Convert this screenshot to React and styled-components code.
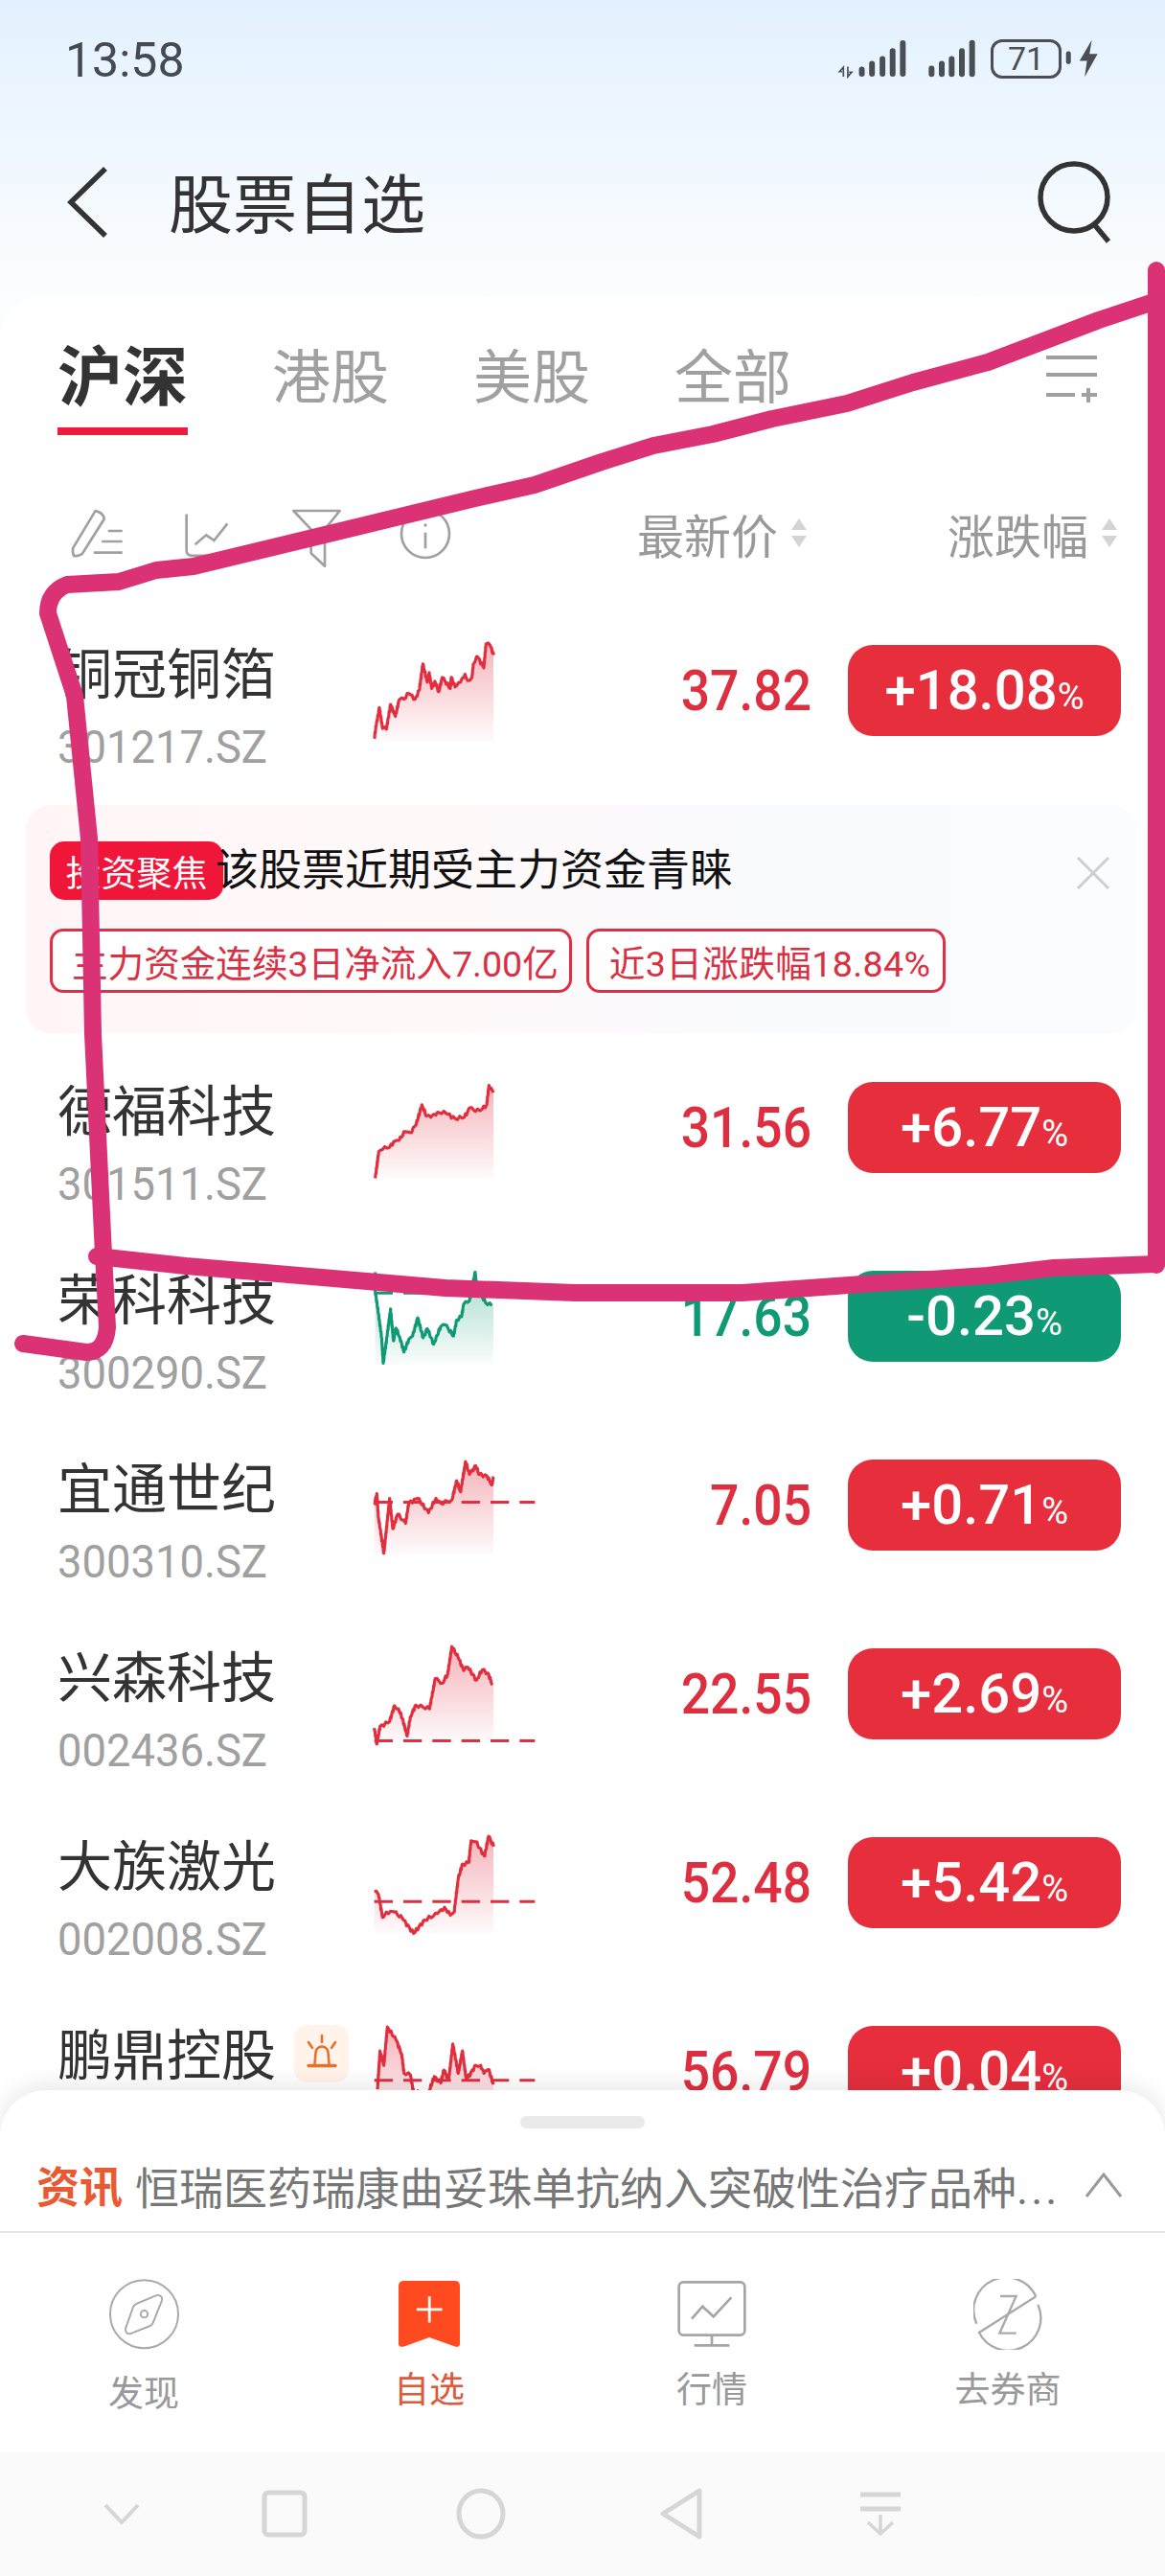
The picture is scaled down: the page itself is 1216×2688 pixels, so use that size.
import React from "react";
import styled, { createGlobalStyle } from "styled-components";

const UP = "#dd2f40";
const DOWN = "#0f9a75";
const FONT = `Roboto, "Noto Sans CJK SC", sans-serif`;

const GlobalStyle = createGlobalStyle`
  html, body {
    margin: 0;
    padding: 0;
    background: #fff;
  }
  * {
    box-sizing: border-box;
  }
`;

// points are plotted in a 3x grid, `cy` is the row's centre on that grid
const stocks = [
  {
    name: "铜冠铜箔", code: "301217.SZ", price: "37.82", pct: "+18.08", cy: 241, floor: 400,
    line: [[92,392],[98,350],[108,295],[118,360],[130,362],[143,285],[158,322],[170,270],[185,268],[200,250],[220,268],[233,240],[244,158],[258,215],[264,185],[272,235],[282,212],[294,245],[305,200],[330,235],[333,200],[345,230],[362,215],[376,190],[385,210],[398,200],[402,158],[415,135],[435,170],[442,95],[455,100],[466,130]],
  },
  {
    name: "德福科技", code: "301511.SZ", price: "31.56", pct: "+6.77", cy: 0, floor: 159,
    line: [[95,159],[106,75],[125,60],[140,62],[153,44],[170,40],[188,13],[205,16],[223,-9],[241,-71],[255,-36],[269,-32],[290,-48],[316,-45],[345,-28],[374,-32],[392,-62],[409,-50],[430,-58],[444,-71],[451,-132],[465,-109]],
  },
  {
    name: "荣科科技", code: "300290.SZ", price: "17.63", pct: "-0.23", cy: 223, floor: 375, down: true, dash: 150,
    line: [[95,85],[95,145],[105,215],[115,290],[120,370],[128,315],[143,200],[152,300],[160,260],[172,290],[185,335],[200,295],[212,285],[228,228],[245,290],[258,262],[278,310],[300,255],[315,250],[340,285],[350,235],[365,225],[372,185],[390,175],[408,85],[415,160],[430,160],[440,180],[460,190]],
  },
  {
    name: "宜通世纪", code: "300310.SZ", price: "7.05", pct: "+0.71", cy: 211, floor: 365, dash: 202,
    line: [[92,210],[100,175],[105,250],[122,362],[140,190],[150,285],[165,240],[190,268],[200,205],[228,190],[262,235],[285,190],[300,205],[335,195],[350,135],[362,170],[378,75],[390,115],[410,88],[420,115],[445,120],[460,148],[466,122]],
  },
  {
    name: "兴森科技", code: "002436.SZ", price: "22.55", pct: "+2.69", cy: 803, floor: 950, dash: 950,
    line: [[92,910],[100,960],[110,905],[140,890],[155,840],[168,850],[180,880],[195,935],[205,875],[222,838],[245,845],[265,850],[283,755],[305,770],[322,740],[335,655],[355,690],[372,730],[385,720],[412,760],[430,728],[448,738],[462,775]],
  },
  {
    name: "大族激光", code: "002008.SZ", price: "52.48", pct: "+5.42", cy: 253, floor: 412, dash: 312,
    line: [[92,280],[105,290],[118,362],[130,345],[155,345],[180,365],[215,412],[250,370],[290,350],[312,330],[330,355],[342,345],[355,240],[368,195],[388,190],[395,122],[410,125],[437,170],[450,108],[466,140]],
  },
  {
    name: "鹏鼎控股", code: "002938.SZ", price: "56.79", pct: "+0.04", cy: 844, floor: 1000, dash: 872, alert: true,
    line: [[102,900],[110,780],[122,825],[133,705],[160,745],[178,790],[185,850],[205,855],[215,910],[262,910],[280,860],[300,880],[310,840],[325,870],[338,758],[355,850],[368,780],[380,870],[410,825],[425,825],[435,850],[450,838],[465,885]],
  },
];

// adds the small tick-by-tick wobble between the plotted points
const roughen = (line, seed) => {
  const out = [];
  let n = 0;
  line.forEach(([x, y], i) => {
    if (i === 0) {
      out.push([x, y]);
      return;
    }
    const [px, py] = line[i - 1];
    const steps = Math.max(1, Math.round(Math.hypot(x - px, y - py) / 7));
    for (let s = 1; s <= steps; s++) {
      n += 1;
      const t = s / steps;
      const wob = s === steps ? 0 : Math.sin(n * 2.3 + seed) * 5.5;
      out.push([px + (x - px) * t, py + (y - py) * t + wob]);
    }
  });
  return out;
};

const Sparkline = ({ id, stock }) => {
  const color = stock.down ? DOWN : "#e12f3f";
  const pts = roughen(stock.line, id * 1.7).map(([x, y]) => [x, y - stock.cy]);
  const d = pts.map(([x, y]) => `${x.toFixed(1)},${y.toFixed(1)}`).join(" ");
  const floor = stock.floor - stock.cy;
  const area = `${pts[0][0]},${floor} ${d} 465,${pts[pts.length - 1][1].toFixed(1)} 465,${floor}`;
  return (
    <ChartSvg viewBox="90 -295.5 510 591">
      <defs>
        <linearGradient id={`fade${id}`} x1="0" y1="0" x2="0" y2="1">
          <stop offset="0" stopColor={color} stopOpacity="0.36" />
          <stop offset="1" stopColor={color} stopOpacity="0.02" />
        </linearGradient>
      </defs>
      <polygon points={area} fill={`url(#fade${id})`} />
      <polyline points={d} fill="none" stroke={color} strokeWidth="9.5" strokeLinejoin="round" />
      {stock.dash !== undefined && (
        <line
          x1="92"
          x2="595"
          y1={stock.dash - stock.cy}
          y2={stock.dash - stock.cy}
          stroke={color}
          strokeWidth="9"
          strokeDasharray="58 33"
        />
      )}
    </ChartSvg>
  );
};

const StockRow = ({ id, stock }) => (
  <Row>
    <NameCell>
      <NameLine>
        <Name>{stock.name}</Name>
        {stock.alert && (
          <AlertBadge>
            <svg width="40" height="44" viewBox="0 0 40 44" fill="none" stroke="#e8702a" strokeWidth="2.6" strokeLinecap="round">
              <path d="M12.5 33l1-12a6.5 6.5 0 0 1 13 0l1 12" />
              <path d="M6 34.5h28" strokeWidth="3.4" />
              <path d="M20 3v7M6 10l4 6M34 10l-4 6" />
            </svg>
          </AlertBadge>
        )}
      </NameLine>
      <Code>{stock.code}</Code>
    </NameCell>
    <Sparkline id={id} stock={stock} />
    <Price $down={stock.down}>{stock.price}</Price>
    <Change $down={stock.down}>
      <ChangeNum>{stock.pct}</ChangeNum>
      <ChangeUnit>%</ChangeUnit>
    </Change>
  </Row>
);

const SortArrows = () => (
  <svg width="20" height="30" viewBox="0 0 20 30" fill="#d4d4d4">
    <path d="M10 0l8 12H2z" />
    <path d="M10 30L2 18h16z" />
  </svg>
);

const navItems = [
  {
    label: "发现",
    drop: true,
    icon: (
      <svg width="75" height="78" viewBox="150 78 226 232" fill="none" stroke="#aaa" strokeWidth="6">
        <circle cx="263" cy="193" r="107" />
        <path d="M312 135q10 5 6 17l-28 70q-3 6-10 9l-58 23q-18 4-18-14l24-68q3-9 12-12l60-25q7-3 12 0z" />
        <circle cx="263" cy="193" r="11" />
      </svg>
    ),
  },
  {
    label: "自选",
    active: true,
    icon: (
      <svg width="66" height="72" viewBox="1030 85 193 210">
        <path d="M1050 88h155q15 0 15 15v177q0 12-15 8l-78-28-77 28q-17 4-17-8V103q0-15 17-15z" fill="#ff4a1f" />
        <path d="M1127 135v80M1088 175h78" stroke="#fff" strokeWidth="8" />
      </svg>
    ),
  },
  {
    label: "行情",
    icon: (
      <svg width="72" height="72" viewBox="133 85 216 216" fill="none" stroke="#a5a5a5" strokeWidth="8">
        <rect x="138" y="92" width="206" height="166" rx="14" />
        <path d="M241 258v32M186 290h110" />
        <path d="M178 207l34-39 34 32 56-60" />
      </svg>
    ),
  },
  {
    label: "去券商",
    icon: (
      <svg width="72" height="74" viewBox="1032 80 216 222" fill="none" stroke="#aaa" strokeWidth="7">
        <path d="M1228 135A102 102 0 0 0 1042 220" />
        <path d="M1228 135L1050 248A102 102 0 0 0 1234 160" />
        <path d="M1116 134h50l-52 116h52" />
      </svg>
    ),
  },
];

const App = () => (
  <Screen>
    <GlobalStyle />
    <StatusBar>
      <Clock>13:58</Clock>
      <StatusIcons>
        <svg width="73" height="42" viewBox="100 60 220 125" fill="#4a4f54">
          <path d="M122 180v-30l-12 14h8M136 148v32l12-14h-8" stroke="#4a4f54" strokeWidth="5" fill="none" />
          <rect x="171" y="148" width="18" height="32" rx="9" />
          <rect x="203" y="130" width="18" height="50" rx="9" />
          <rect x="236" y="115" width="18" height="65" rx="9" />
          <rect x="268" y="90" width="18" height="90" rx="9" />
          <rect x="300" y="65" width="18" height="115" rx="9" />
        </svg>
        <SignalB width="50" height="42" viewBox="390 60 150 125" fill="#4a4f54">
          <rect x="391" y="145" width="18" height="35" rx="9" />
          <rect x="423" y="130" width="18" height="50" rx="9" />
          <rect x="454" y="115" width="18" height="65" rx="9" />
          <rect x="486" y="90" width="18" height="90" rx="9" />
          <rect x="518" y="65" width="18" height="115" rx="9" />
        </SignalB>
        <Battery>71</Battery>
        <Charging width="37" height="42" viewBox="815 60 110 125" fill="#4a4f54">
          <rect x="820" y="100" width="15" height="40" rx="7" />
          <path d="M900 65l-38 65h23l-7 50 40-72h-25z" />
        </Charging>
      </StatusIcons>
    </StatusBar>

    <Header>
      <svg width="44" height="74" viewBox="0 0 44 74" fill="none" stroke="#333" strokeWidth="5.5">
        <path d="M40 2L4 37l36 35" />
      </svg>
      <Title>股票自选</Title>
      <SearchIcon width="82" height="86" viewBox="0 0 82 86" fill="none" stroke="#333" strokeWidth="5.5">
        <ellipse cx="38" cy="38" rx="35" ry="35" />
        <path d="M59 66l15 18" />
      </SearchIcon>
    </Header>

    <ListCard>
      <TabBar>
        <Tab $active>沪深</Tab>
        <Tab>港股</Tab>
        <Tab>美股</Tab>
        <Tab>全部</Tab>
        <TabEdit width="56" height="50" viewBox="0 0 56 50" fill="none" stroke="#a0a0a0" strokeWidth="4">
          <path d="M1 3h53M1 21h53M1 42h30M45 35v15M38 42h16" />
        </TabEdit>
      </TabBar>

      <ColumnHead>
        <HeadTool>
          <svg width="58" height="55" viewBox="70 60 175 165" fill="none" stroke="#a0a0a0" strokeWidth="8" strokeLinejoin="round">
            <path d="M150 72q25 5 28 25L108 208q-12 8-26 5-5-10-2-25z" />
            <path d="M190 135h45M170 168h65M145 203h90" />
          </svg>
        </HeadTool>
        <HeadTool>
          <svg width="48" height="55" viewBox="425 60 145 165" fill="none" stroke="#a0a0a0" strokeWidth="8">
            <path d="M433 82v113q0 18 18 18h114" />
            <path d="M460 178l35-30 25 17 42-53" />
          </svg>
        </HeadTool>
        <HeadTool>
          <OverflowSvg width="55" height="55" viewBox="760 60 165 165" fill="none" stroke="#a0a0a0" strokeWidth="8" strokeLinejoin="round">
            <path d="M770 72h145l-47 58v115l-43-40v-75z" />
          </OverflowSvg>
        </HeadTool>
        <HeadTool>
          <svg width="54" height="55" viewBox="1105 60 160 165" fill="none" stroke="#a0a0a0" strokeWidth="8">
            <circle cx="1185" cy="144" r="75" />
            <path d="M1185 140v50" />
            <circle cx="1185" cy="117" r="5" fill="#a0a0a0" stroke="none" />
          </svg>
        </HeadTool>
        <SortGroup $first>
          <SortLabel>最新价</SortLabel>
          <SortArrows />
        </SortGroup>
        <SortGroup>
          <SortLabel>涨跌幅</SortLabel>
          <SortArrows />
        </SortGroup>
      </ColumnHead>

      <StockRow id={0} stock={stocks[0]} />

      <Insight>
        <InsightTop>
          <InsightBadge>投资聚焦</InsightBadge>
          <InsightTitle>该股票近期受主力资金青睐</InsightTitle>
          <InsightClose width="36" height="36" viewBox="0 0 36 36" stroke="#cfcfcf" strokeWidth="3">
            <path d="M2 2l32 32M34 2L2 34" />
          </InsightClose>
        </InsightTop>
        <InsightTags>
          <InsightTag>主力资金连续3日净流入7.00亿</InsightTag>
          <InsightTag $wide>近3日涨跌幅18.84%</InsightTag>
        </InsightTags>
      </Insight>

      {stocks.slice(1).map((stock, i) => (
        <StockRow key={stock.code} id={i + 1} stock={stock} />
      ))}
    </ListCard>

    <Sheet>
      <Handle />
      <NewsRow>
        <NewsTag>资讯</NewsTag>
        <NewsText>恒瑞医药瑞康曲妥珠单抗纳入突破性治疗品种<NewsDots>...</NewsDots></NewsText>
        <svg width="38" height="26" viewBox="0 0 38 26" fill="none" stroke="#999" strokeWidth="3">
          <path d="M1 25L19 2l18 23" />
        </svg>
      </NewsRow>
      <NavBar>
        {navItems.map((item) => (
          <NavItem key={item.label}>
            <NavIcon>{item.icon}</NavIcon>
            <NavLabel $active={item.active} $drop={item.drop}>{item.label}</NavLabel>
          </NavItem>
        ))}
      </NavBar>
      <SystemBar>
        <svg width="38" height="22" viewBox="0 0 38 22" fill="none" stroke="#d6d6d6" strokeWidth="4">
          <path d="M2 2l17 18L36 2" />
        </svg>
        <svg width="48" height="50" viewBox="0 0 48 50" fill="none" stroke="#d6d6d6" strokeWidth="5">
          <rect x="3" y="3" width="42" height="44" rx="4" />
        </svg>
        <svg width="52" height="54" viewBox="0 0 52 54" fill="none" stroke="#d6d6d6" strokeWidth="5">
          <ellipse cx="26" cy="27" rx="23" ry="24" />
        </svg>
        <svg width="46" height="54" viewBox="0 0 46 54" fill="none" stroke="#d6d6d6" strokeWidth="5" strokeLinejoin="round">
          <path d="M42 3L4 27l38 24z" />
        </svg>
        <svg width="44" height="46" viewBox="0 0 44 46" fill="none" stroke="#d6d6d6">
          <path d="M1 3h42M1 18h42" strokeWidth="5" />
          <path d="M22 24v20M9 32l13 12 13-12" strokeWidth="3.5" />
        </svg>
      </SystemBar>
    </Sheet>

    {/* marker strokes drawn over the list */}
    <MarkerLayer viewBox="0 0 1216 2688" fill="none" stroke="#db3275" strokeWidth="18" strokeLinecap="round" strokeLinejoin="round">
      <path d="M1207 282V1320" />
      <path d="M1207 314L1147 334L1031 378L953 399L884 421L806 437L744 453L682 465L628 482L558 506L496 520L310 565L202 591L163 595L124 607L70 610Q50 618 50 640L78 726L93 875L97 1079L108 1309L112 1385Q110 1411 90 1411L24 1402" />
      <path d="M1207 1319L1100 1323L1031 1331L900 1340L775 1349L600 1349L465 1344L194 1321L101 1311" />
    </MarkerLayer>
  </Screen>
);

const Screen = styled.div`
  position: relative;
  width: 1216px;
  height: 2688px;
  overflow: hidden;
  font-family: ${FONT};
  background: linear-gradient(180deg, #e3f1fe 0, #ecf6ff 120px, #f8fbff 250px, #fcfdff 310px);
`;

const StatusBar = styled.div`
  display: flex;
  align-items: center;
  justify-content: space-between;
  height: 122px;
  padding: 0 68px 0 68px;
`;

const Clock = styled.span`
  margin-top: 3px;
  font-size: 50px;
  color: #454a50;
`;

const StatusIcons = styled.div`
  display: flex;
  align-items: center;
`;

const SignalB = styled.svg`
  margin-left: 23px;
`;

const Battery = styled.span`
  display: flex;
  align-items: center;
  justify-content: center;
  width: 74px;
  height: 41px;
  margin-left: 15px;
  border: 3.5px solid #4a4f54;
  border-radius: 12px;
  font-size: 34px;
  color: #4a4f54;
`;

const Charging = styled.svg`
  margin-left: 3px;
`;

const Header = styled.div`
  display: flex;
  align-items: center;
  height: 178px;
  padding: 0 51px 0 70px;
`;

const Title = styled.h1`
  margin: -6px 0 0 62px;
  font-size: 67px;
  font-weight: 400;
  color: #333;
`;

const SearchIcon = styled.svg`
  margin-left: auto;
`;

const ListCard = styled.div`
  margin-top: 10px;
  height: 2400px;
  background: #fff;
  border-radius: 44px 44px 0 0;
`;

const TabBar = styled.div`
  display: flex;
  align-items: flex-start;
  gap: 88px;
  padding: 45px 69px 0 60px;
`;

const Tab = styled.div`
  height: 99px;
  line-height: 80px;
  font-size: ${(p) => (p.$active ? "68px" : "61px")};
  font-weight: ${(p) => (p.$active ? 700 : 400)};
  color: ${(p) => (p.$active ? "#333" : "#a0a0a0")};
  border-bottom: 8px solid ${(p) => (p.$active ? "#ee1c3c" : "transparent")};
`;

const TabEdit = styled.svg`
  margin: 15px 0 0 auto;
`;

const ColumnHead = styled.div`
  display: flex;
  align-items: center;
  height: 168px;
  padding: 36px 48px 0 45px;
`;

const HeadTool = styled.div`
  display: flex;
  justify-content: center;
  width: 114px;
`;

const OverflowSvg = styled.svg`
  overflow: visible;
`;

const SortGroup = styled.div`
  display: flex;
  align-items: center;
  gap: 12px;
  margin-left: ${(p) => (p.$first ? "auto" : "145px")};
`;

const SortLabel = styled.span`
  font-size: 49px;
  color: #999;
`;

const Row = styled.div`
  display: grid;
  grid-template-columns: 330px 170px 1fr 285px;
  align-items: center;
  height: 197px;
  padding: 0 46px 0 60px;
`;

const NameCell = styled.div`
  align-self: start;
  padding-top: 53px;
`;

const NameLine = styled.div`
  display: flex;
  align-items: center;
  gap: 19px;
  height: 60px;
`;

const Name = styled.span`
  font-size: 57px;
  line-height: 60px;
  color: #333;
`;

const AlertBadge = styled.span`
  display: flex;
  align-items: center;
  justify-content: center;
  width: 57px;
  height: 60px;
  margin-top: -6px;
  border-radius: 14px;
  background: #fff3ea;
`;

const Code = styled.div`
  margin-top: 20px;
  font-size: 48px;
  line-height: 50px;
  color: #a0a0a0;
  transform: scaleX(0.945);
  transform-origin: left center;
`;

const ChartSvg = styled.svg`
  display: block;
  width: 170px;
  height: 197px;
  overflow: visible;
`;

const Price = styled.div`
  padding-right: 38px;
  text-align: right;
  font-size: 59px;
  font-weight: 500;
  color: ${(p) => (p.$down ? DOWN : UP)};
  transform: scaleX(0.905);
  transform-origin: calc(100% - 38px) center;
`;

const Change = styled.div`
  display: flex;
  align-items: baseline;
  justify-content: center;
  height: 95px;
  line-height: 95px;
  border-radius: 26px;
  color: #fff;
  background: ${(p) => (p.$down ? DOWN : "#e62e3d")};
`;

const ChangeNum = styled.span`
  font-size: 58px;
  font-weight: 500;
`;

const ChangeUnit = styled.span`
  font-size: 38px;
`;

const Insight = styled.div`
  height: 238px;
  margin: 21px 30px 0 27px;
  padding: 38px 27px 0 25px;
  border-radius: 26px;
  background: linear-gradient(90deg, #fff5f6 0, #fff9fa 40%, #f9fbff 70%, #fbfcff 100%);
`;

const InsightTop = styled.div`
  display: flex;
  align-items: center;
`;

const InsightBadge = styled.span`
  display: flex;
  align-items: center;
  justify-content: center;
  width: 181px;
  height: 61px;
  border-radius: 15px;
  font-size: 37px;
  color: #fff;
  background: #f0163a;
`;

const InsightTitle = styled.span`
  position: relative;
  margin: -8px 0 0 -8px;
  font-size: 45px;
  color: #111;
`;

const InsightClose = styled.svg`
  margin: 4px 0 0 auto;
`;

const InsightTags = styled.div`
  display: flex;
  gap: 15px;
  margin-top: 30px;
`;

const InsightTag = styled.span`
  display: flex;
  align-items: center;
  height: 67px;
  padding: ${(p) => (p.$wide ? "0 13px 0 21px" : "0 11px 0 20px")};
  border: 3px solid #dd2f45;
  border-radius: 14px;
  font-size: 37.6px;
  letter-spacing: ${(p) => (p.$wide ? "0.4px" : "0")};
  color: #d93043;
  background: #fff;
`;

const Sheet = styled.div`
  position: absolute;
  left: 0;
  right: 0;
  bottom: 0;
  height: 507px;
  display: flex;
  flex-direction: column;
  overflow: hidden;
  border-radius: 48px 48px 0 0;
  background: #fff;
  box-shadow: 0 -6px 24px rgba(0, 0, 0, 0.09);
`;

const Handle = styled.div`
  flex: none;
  width: 130px;
  height: 13px;
  margin: 27px auto 0;
  border-radius: 7px;
  background: #eaeaea;
`;

const NewsRow = styled.div`
  flex: none;
  display: flex;
  align-items: center;
  height: 109px;
  padding: 10px 45px 0 38px;
  border-bottom: 2px solid #e6e6e6;
`;

const NewsTag = styled.span`
  font-size: 45px;
  font-weight: 700;
  color: #e85a33;
`;

const NewsText = styled.span`
  flex: 1;
  margin-left: 13px;
  font-size: 46px;
  white-space: nowrap;
  color: #777;
`;

const NewsDots = styled.span`
  letter-spacing: 3px;
`;

const NavBar = styled.div`
  flex: none;
  display: grid;
  grid-template-columns: 300px 296px 294px 324px;
  height: 229px;
  padding-top: 47px;
`;

const NavItem = styled.div`
  display: flex;
  flex-direction: column;
  align-items: center;
`;

const NavIcon = styled.div`
  display: flex;
  align-items: center;
  justify-content: center;
  height: 76px;
`;

const NavLabel = styled.span`
  margin-top: ${(p) => (p.$drop ? "24px" : "20px")};
  font-size: 37px;
  line-height: 44px;
  color: ${(p) => (p.$active ? "#dd5a3c" : "#999")};
`;

const SystemBar = styled.div`
  flex: 1;
  display: grid;
  grid-template-columns: 254px 85px 326px 92px 324px;
  justify-items: center;
  align-items: center;
  padding-bottom: 2px;
  background: #fafafa;
`;

const MarkerLayer = styled.svg`
  position: absolute;
  top: 0;
  left: 0;
  width: 1216px;
  height: 2688px;
  pointer-events: none;
`;

export default App;
